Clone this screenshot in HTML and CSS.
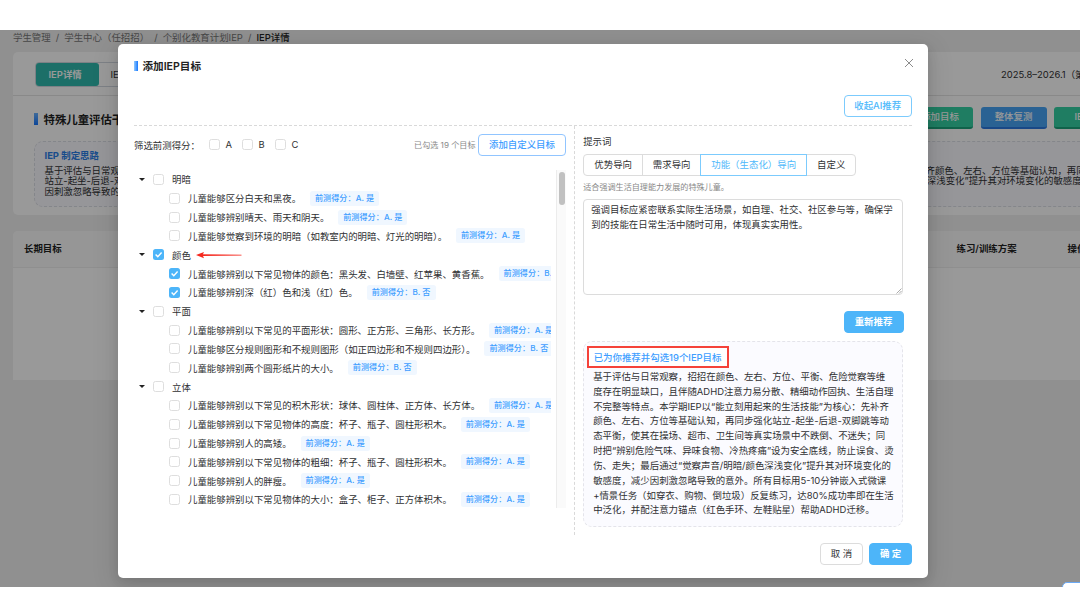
FILE: index.html
```html
<!DOCTYPE html>
<html lang="zh-CN">
<head>
  <meta charset="UTF-8">
  <meta name="viewport" content="width=device-width, initial-scale=1.0">
  <title>IEP详情</title>
  <link rel="stylesheet" href="styles.css">
</head>
<body>
  <div class="screen">
    <div class="page">
      <nav class="breadcrumb">
        <span>学生管理</span><i>/</i><span>学生中心（任招招）</span><i>/</i><span>个别化教育计划IEP</span><i>/</i><b>IEP详情</b>
      </nav>

      <section class="card">
        <div class="card-top">
          <div class="page-tabs">
            <span class="page-tab on">IEP详情</span>
            <span class="page-tab">IEP总结</span>
          </div>
          <span class="term">2025.8–2026.1（第一学期）</span>
        </div>
        <div class="card-head">
          <h2 class="bar-title">特殊儿童评估干预</h2>
          <div class="actions">
            <span class="act green">添加目标</span>
            <span class="act blue">整体复测</span>
            <span class="act green last">IEP下载</span>
          </div>
        </div>
        <div class="idea">
          <h3>IEP 制定思路</h3>
          <p><span>基于评估与日常观察，招招在颜色</span><span>齐颜色、左右、方位等基础认知，再同步强化</span></p>
          <p class="second"><span>站立-起坐-后退-双脚跳等动态平衡</span><span>深浅变化”提升其对环境变化的敏感度，减少</span></p>
          <p><span>因刺激忽略导致的意外。</span></p>
        </div>
      </section>

      <section class="table">
        <div class="table-head">
          <span class="col-goal">长期目标</span>
          <span class="col-plan">练习/训练方案</span>
          <span class="col-op">操作</span>
        </div>
      </section>
    </div>
    <div class="mask"></div>
    <div class="helper"></div>

    <div class="modal">
      <div class="modal-head">
        <h1>添加IEP目标</h1>
        <svg class="close" viewBox="0 0 10 10"><path d="M1 1l8 8M9 1L1 9"/></svg>
      </div>
      <div class="toolbar"><button class="btn ai">收起AI推荐</button></div>

      <div class="columns">
        <div class="left">
          <div class="filter">
            <span class="filter-label">筛选前测得分：</span>
            <label><i class="box"></i>A</label>
            <label><i class="box"></i>B</label>
            <label><i class="box"></i>C</label>
            <span class="count">已勾选 19 个目标</span>
            <button class="btn custom">添加自定义目标</button>
          </div>

          <div class="tree-wrap">
            <ul class="tree">
              <li class="group"><i class="caret"></i><i class="box"></i>明暗</li>
              <li><i class="box"></i>儿童能够区分白天和黑夜。<em>前测得分：A. 是</em></li>
              <li><i class="box"></i>儿童能够辨别晴天、雨天和阴天。<em>前测得分：A. 是</em></li>
              <li><i class="box"></i>儿童能够觉察到环境的明暗（如教室内的明暗、灯光的明暗）。<em>前测得分：A. 是</em></li>
              <li class="group"><i class="caret"></i><i class="box checked"><svg viewBox="0 0 11 11"><path d="M2.6 5.4l2.2 2.3 3.8-4.2"/></svg></i>颜色
                <svg class="arrow" viewBox="0 0 46 8"><path d="M6 3.200L45.500 3.700V4.500L6 5z"/><path d="M0 4L8 .9 6.6 4 8 7.200z"/></svg>
              </li>
              <li><i class="box checked"><svg viewBox="0 0 11 11"><path d="M2.6 5.4l2.2 2.3 3.8-4.2"/></svg></i>儿童能够辨别以下常见物体的颜色：黑头发、白墙壁、红苹果、黄香蕉。<em>前测得分：B. 否</em></li>
              <li><i class="box checked"><svg viewBox="0 0 11 11"><path d="M2.6 5.4l2.2 2.3 3.8-4.2"/></svg></i>儿童能够辨别深（红）色和浅（红）色。<em>前测得分：B. 否</em></li>
              <li class="group"><i class="caret"></i><i class="box"></i>平面</li>
              <li><i class="box"></i>儿童能够辨别以下常见的平面形状：圆形、正方形、三角形、长方形。<em>前测得分：A. 是</em></li>
              <li><i class="box"></i>儿童能够区分规则图形和不规则图形（如正四边形和不规则四边形）。<em>前测得分：B. 否</em></li>
              <li><i class="box"></i>儿童能够辨别两个圆形纸片的大小。<em>前测得分：B. 否</em></li>
              <li class="group"><i class="caret"></i><i class="box"></i>立体</li>
              <li><i class="box"></i>儿童能够辨别以下常见的积木形状：球体、圆柱体、正方体、长方体。<em>前测得分：A. 是</em></li>
              <li><i class="box"></i>儿童能够辨别以下常见物体的高度：杯子、瓶子、圆柱形积木。<em>前测得分：A. 是</em></li>
              <li><i class="box"></i>儿童能够辨别人的高矮。<em>前测得分：A. 是</em></li>
              <li><i class="box"></i>儿童能够辨别以下常见物体的粗细：杯子、瓶子、圆柱形积木。<em>前测得分：A. 是</em></li>
              <li><i class="box"></i>儿童能够辨别人的胖瘦。<em>前测得分：A. 是</em></li>
              <li><i class="box"></i>儿童能够辨别以下常见物体的大小：盒子、柜子、正方体积木。<em>前测得分：A. 是</em></li>
            </ul>
            <div class="scrollbar"><div class="thumb"></div></div>
          </div>
        </div>

        <div class="right">
          <div class="prompt-label">提示词</div>
          <div class="segments">
            <span class="w1">优势导向</span>
            <span class="w2">需求导向</span>
            <span class="w3 active">功能（生态化）导向</span>
            <span class="w4">自定义</span>
          </div>
          <div class="hint">适合强调生活自理能力发展的特殊儿童。</div>
          <div class="textarea">强调目标应紧密联系实际生活场景，如自理、社交、社区参与等，确保学<br>到的技能在日常生活中随时可用，体现真实实用性。
            <svg class="grip" viewBox="0 0 6 6"><path d="M.5 5.5l5-5M3 5.5L5.500 3"/></svg>
          </div>
          <button class="btn primary again">重新推荐</button>
          <div class="result">
            <div class="result-title">已为你推荐并勾选19个IEP目标</div>
            <p>基于评估与日常观察，招招在颜色、左右、方位、平衡、危险觉察等维<br>度存在明显缺口，且伴随ADHD注意力易分散、精细动作固执、生活自理<br>不完整等特点。本学期IEP以“能立刻用起来的生活技能”为核心：先补齐<br>颜色、左右、方位等基础认知，再同步强化站立-起坐-后退-双脚跳等动<br>态平衡，使其在操场、超市、卫生间等真实场景中不跌倒、不迷失；同<br>时把“辨别危险气味、异味食物、冷热疼痛”设为安全底线，防止误食、烫<br>伤、走失；最后通过“觉察声音/明暗/颜色深浅变化”提升其对环境变化的<br>敏感度，减少因刺激忽略导致的意外。所有目标用5-10分钟嵌入式微课<br>+情景任务（如穿衣、购物、倒垃圾）反复练习，达80%成功率即在生活<br>中泛化，并配注意力锚点（红色手环、左鞋贴星）帮助ADHD迁移。</p>
          </div>
        </div>
      </div>

      <div class="modal-foot">
        <button class="btn cancel">取 消</button>
        <button class="btn primary ok">确 定</button>
      </div>
    </div>
  </div>
</body>
</html>
```

FILE: styles.css
```css
* {
  box-sizing: border-box;
}
body {
  margin: 0;
  background: #fff;
  font-family: Inter, "Noto Sans CJK SC", sans-serif;
  font-size: 9.43px;
  color: #303133;
}
h1, h2, h3, p, ul {
  margin: 0;
  padding: 0;
}
i, em {
  font-style: normal;
}
.screen {
  position: relative;
  height: 557px;
  margin-top: 30px;
  overflow: hidden;
  background: #f0f0f0;
}
.mask {
  position: absolute;
  inset: 0;
  background: rgba(0, 0, 0, 0.4);
}

/* page under the dialog */
.page {
  width: 1120px;
  padding-left: 13px;
  white-space: nowrap;
}
.breadcrumb {
  display: flex;
  height: 22px;
  line-height: 15px;
  color: #777;
}
.breadcrumb i {
  margin: 0 5.1px;
}
.breadcrumb b {
  font-weight: 500;
  color: #222;
}
.card {
  height: 162.5px;
  background: #fff;
  border-radius: 5px;
}
.card-top {
  display: flex;
  justify-content: space-between;
  height: 44px;
  padding: 10px 0 0 21.5px;
  border-bottom: 1px solid #e4e4e4;
}
.page-tabs {
  display: flex;
  height: 25px;
  line-height: 23px;
  border: 1px solid #d0d7e0;
  border-radius: 4px;
}
.page-tab {
  width: 63px;
  padding-left: 12px;
}
.page-tab.on {
  padding-left: 13px;
  background: #2fb9ad;
  color: #fff;
  font-weight: 600;
  border-radius: 3px;
}
.term {
  width: 119px;
  line-height: 25px;
}
.card-head {
  display: flex;
  height: 45px;
  padding: 11px 0 0 21px;
}
.bar-title {
  display: flex;
  align-items: center;
  width: 877.5px;
  height: 23px;
  font-size: 11.4px;
  font-weight: 600;
  color: #222;
}
.bar-title::before {
  content: "";
  width: 4px;
  height: 12px;
  margin-right: 5.5px;
  background: linear-gradient(#69b1ff, #1677ff);
}
.actions {
  display: flex;
  gap: 7.5px;
}
.act {
  width: 66px;
  height: 22px;
  line-height: 20px;
  text-align: center;
  color: #fff;
  font-weight: 500;
  border-radius: 3px;
}
.green {
  background: #34d1a4;
  border-bottom: 2px solid #1ba37c;
}
.blue {
  background: #46a4f5;
  border-bottom: 2px solid #2a78e0;
}
.last {
  padding-left: 8px;
}
.idea {
  height: 66px;
  margin-left: 21px;
  padding: 8px 0 0 9.5px;
  background: #fafaff;
  border: 1px dashed #dcdfe6;
  border-radius: 9px;
}
.idea h3 {
  height: 15.5px;
  line-height: 12px;
  font-size: 9.43px;
  font-weight: 700;
  color: #2b7fe8;
}
.idea p {
  display: flex;
  line-height: 10.8px;
}
.idea p span:first-child {
  width: 881px;
}
.idea .second span:first-child {
  width: 882.3px;
}
.table {
  height: 149px;
  margin-top: 16.5px;
  background: #fff;
  border-radius: 5px 5px 0 0;
}
.table-head {
  display: flex;
  height: 37px;
  line-height: 36px;
  padding-left: 11px;
  font-weight: 600;
  color: #222;
  background: #fafafa;
  border-bottom: 1px solid #eee;
  border-radius: 5px 5px 0 0;
}
.col-goal {
  width: 932.5px;
}
.col-plan {
  width: 111px;
}
.helper {
  position: absolute;
  left: 1062px;
  top: 552px;
  width: 40px;
  height: 30px;
  background: #fff;
  border: 1px solid #6aa9f5;
  border-radius: 5px;
}

/* dialog */
.modal {
  position: absolute;
  left: 118px;
  top: 14px;
  width: 810px;
  height: 534px;
  padding: 0 16px;
  background: #fff;
  border-radius: 5px;
  box-shadow: 0 4px 11px rgba(0, 0, 0, 0.1), 0 6px 24px 4px rgba(0, 0, 0, 0.1);
  white-space: nowrap;
}
.modal-head {
  display: flex;
  justify-content: space-between;
  height: 51px;
}
.modal-head h1 {
  display: flex;
  align-items: center;
  height: 43px;
  font-size: 10.6px;
  font-weight: 600;
  color: #222;
}
.modal-head h1::before {
  content: "";
  width: 3.5px;
  height: 10px;
  margin-right: 5px;
  background: linear-gradient(90deg, #91caff, #1677ff);
}
.close {
  width: 10px;
  height: 10px;
  margin: 14px -2px 0 0;
  fill: none;
  stroke: #8c8c8c;
}
.btn {
  height: 22px;
  padding: 0;
  font: inherit;
  line-height: 20px;
  text-align: center;
  color: #303133;
  background: #fff;
  border: 1px solid #dcdcdc;
  border-radius: 4px;
}
.toolbar {
  display: flex;
  justify-content: flex-end;
  height: 31px;
  border-bottom: 1px dashed #d9d9d9;
}
.ai {
  width: 68.5px;
  color: #4db8fb;
  font-weight: 500;
  border-color: #7ccbfd;
}
.columns {
  display: flex;
  height: 409px;
}
.left {
  width: 441px;
  border-right: 1px dashed #d9d9d9;
}
.filter {
  display: flex;
  align-items: center;
  height: 37px;
}
.filter-label {
  width: 74.5px;
}
.filter label {
  display: flex;
  align-items: center;
  width: 33px;
}
.box {
  flex: none;
  width: 11px;
  height: 11px;
  margin-right: 6px;
  border: 1px solid #dedede;
  border-radius: 2.5px;
  background: #fff;
}
.checked {
  border: 0;
  background: #4db5f9;
}
.box svg {
  display: block;
  fill: none;
  stroke: #fff;
  stroke-width: 1.4;
}
.count {
  margin-left: auto;
  margin-right: 2.5px;
  font-size: 8.1px;
  color: #888;
}
.custom {
  width: 88px;
  margin-right: 8px;
  color: #409eff;
  font-weight: 500;
  border-color: #91c5ff;
}
.tree-wrap {
  display: flex;
  width: 432px;
  height: 338px;
  margin-top: 7px;
}
.tree {
  width: 417px;
  margin-right: 5px;
  overflow: hidden;
  list-style: none;
}
.tree li {
  display: flex;
  align-items: center;
  height: 18.83px;
  padding-left: 35px;
}
.tree .box {
  margin-right: 8px;
}
.tree .group {
  padding-left: 5px;
}
.caret {
  margin-right: 8px;
  border: 3px solid transparent;
  border-top: 3.5px solid #222;
  border-bottom: 0;
}
.tree em {
  flex: none;
  width: 69px;
  height: 15px;
  margin-left: 9px;
  font-size: 8.1px;
  font-weight: 500;
  line-height: 15px;
  letter-spacing: 0.05px;
  text-align: center;
  color: #409eff;
  background: #f0f7ff;
  border-radius: 2.5px;
}
.arrow {
  width: 46px;
  height: 8px;
  margin-left: 5px;
  fill: #f5281e;
}
.scrollbar {
  width: 10px;
  padding: 2px 2px 0;
  background: #fafafa;
  border-left: 1px solid #ececec;
}
.thumb {
  width: 5.5px;
  height: 33px;
  background: #c1c1c1;
  border-radius: 3px;
}
.right {
  display: flex;
  flex-direction: column;
  width: 328.5px;
  padding-left: 8.2px;
}
.prompt-label {
  height: 28px;
  line-height: 31px;
}
.segments {
  display: flex;
  height: 22px;
  line-height: 20px;
  text-align: center;
}
.segments span {
  margin-right: -1px;
  border: 1px solid #dcdcdc;
}
.segments .w1 {
  width: 60px;
  border-radius: 4px 0 0 4px;
}
.segments .w2 {
  width: 59px;
}
.segments .w3 {
  width: 107px;
}
.segments .w4 {
  width: 50px;
  border-radius: 0 4px 4px 0;
}
.segments .active {
  z-index: 1;
  color: #4db8fb;
  border-color: #7ccbfd;
}
.hint {
  height: 23px;
  line-height: 22px;
  font-size: 8.1px;
  color: #888;
}
.textarea {
  position: relative;
  width: 320px;
  height: 96px;
  padding: 3px 7px;
  line-height: 14.8px;
  border: 1px solid #dcdcdc;
  border-radius: 4px;
}
.grip {
  position: absolute;
  right: 0;
  bottom: 0;
  width: 6px;
  height: 6px;
  fill: none;
  stroke: #888;
  stroke-width: 0.7;
}
.primary {
  color: #fff;
  font-weight: 600;
  background: #4db5f9;
  border-color: #4db5f9;
}
.again {
  align-self: flex-end;
  width: 60px;
  margin-top: 16px;
}
.result {
  width: 320px;
  height: 186px;
  margin-top: 8px;
  padding: 4px 2.5px;
  background: #fbfbff;
  border: 1px dashed #e4e4ea;
  border-radius: 9px;
}
.result-title {
  width: 142px;
  height: 22px;
  padding-left: 5px;
  line-height: 19px;
  font-weight: 500;
  color: #409eff;
  background: #fff;
  border: 2px solid #f5423a;
}
.result p {
  padding: 2px 0 0 6.5px;
  line-height: 14.83px;
}
.modal-foot {
  display: flex;
  justify-content: flex-end;
  gap: 6px;
  padding-top: 8px;
}
.cancel, .ok {
  width: 43px;
}
```
